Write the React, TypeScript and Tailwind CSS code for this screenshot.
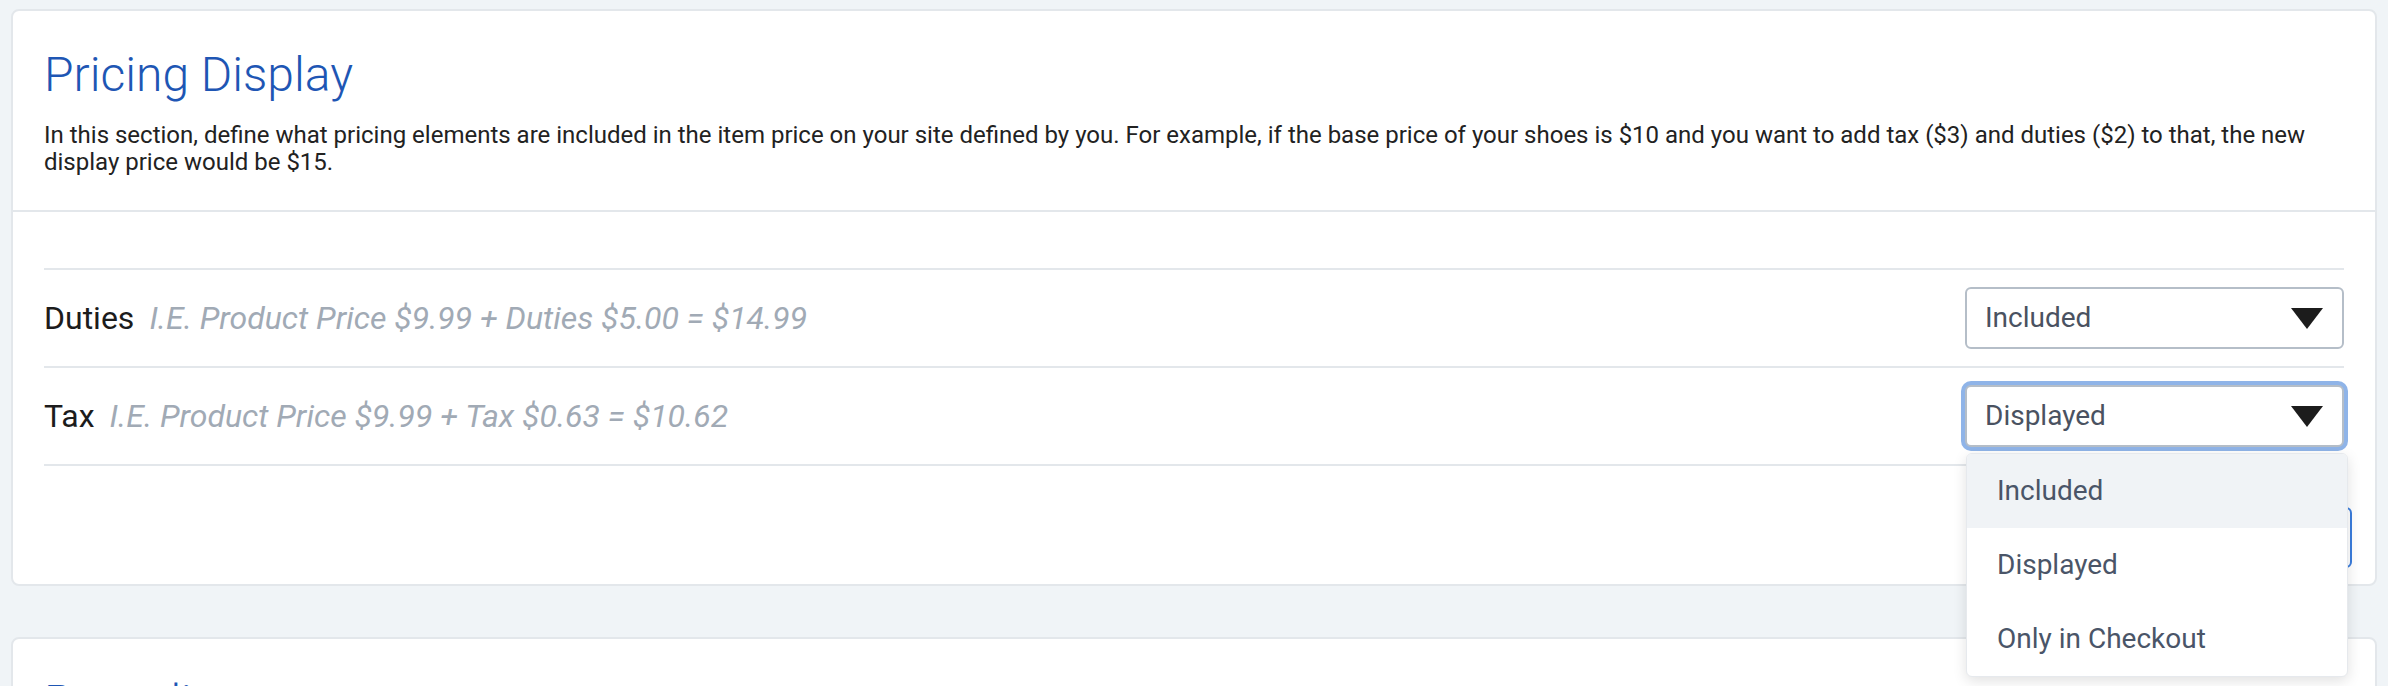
import { ReactNode } from "react";

const OPTIONS = ["Included", "Displayed", "Only in Checkout"];

function Caret() {
  return (
    <svg width="32" height="21" viewBox="0 0 32 21" className="shrink-0">
      <path d="M0 0 H32 L16 21 Z" fill="#1c1c1c" />
    </svg>
  );
}

function SelectBox({ value, open = false }: { value: string; open?: boolean }) {
  return (
    <div className="relative">
      <div
        className={
          open
            ? "flex h-[62px] w-[379px] items-center justify-between rounded-[6px] border-2 border-[#b5bec8] bg-white pl-[18px] pr-[19px] ring-4 ring-[#8fb4e8]"
            : "flex h-[62px] w-[379px] items-center justify-between rounded-[6px] border-2 border-[#b5bec8] bg-white pl-[18px] pr-[19px]"
        }
      >
        <span className="text-[28px] leading-none text-[#4a5261]">{value}</span>
        <Caret />
      </div>

      {open && (
        <ul className="absolute left-[1px] top-[68px] z-10 w-[382px] overflow-hidden rounded-[6px] border border-[#e6e9ed] bg-white shadow-[0_4px_14px_rgba(0,0,0,0.12)]">
          {OPTIONS.map((opt, i) => (
            <li
              key={opt}
              className={
                i === 0
                  ? "flex h-[74px] items-center bg-[#f0f3f6] px-[30px] text-[28px] text-[#4a5568]"
                  : "flex h-[74px] items-center px-[30px] text-[28px] text-[#4a5568]"
              }
            >
              {opt}
            </li>
          ))}
        </ul>
      )}
    </div>
  );
}

function PricingRow({
  label,
  hint,
  children,
}: {
  label: string;
  hint: string;
  children: ReactNode;
}) {
  return (
    <div className="flex items-center justify-between border-b-2 border-[#e3e7eb] py-[17px]">
      <p className="text-[32px] leading-none text-[#1c1c1c]">
        {label}
        <span className="ml-[15px] italic text-[#a1aab5]">{hint}</span>
      </p>
      {children}
    </div>
  );
}

function CardHeader({ title, children }: { title: string; children?: ReactNode }) {
  return (
    <header className="border-b-2 border-[#e3e7eb] px-[31px] pb-[34px] pt-[34px]">
      <h1 className="text-[48px] font-light leading-[59px] text-[#1e56b4]">{title}</h1>
      {children && (
        <p className="mt-[18px] text-[24px] leading-[27px] text-[#222222]">{children}</p>
      )}
    </header>
  );
}

export default function App() {
  return (
    <div className="min-h-screen bg-[#f0f4f7] px-[11px] pt-[9px] font-['Roboto',sans-serif]">
      {/* Pricing display card */}
      <section className="rounded-[8px] border-2 border-[#e3e7eb] bg-white">
        <CardHeader title="Pricing Display">
          In this section, define what pricing elements are included in the item price on your
          site defined by you. For example, if the base price of your shoes is $10 and you want to
          add tax ($3) and duties ($2) to that, the new display price would be $15.
        </CardHeader>

        <div className="px-[31px] pb-[16px] pt-[56px]">
          <div className="border-t-2 border-[#e3e7eb]">
            <PricingRow label="Duties" hint="I.E. Product Price $9.99 + Duties $5.00 = $14.99">
              <SelectBox value="Included" />
            </PricingRow>
            <PricingRow label="Tax" hint="I.E. Product Price $9.99 + Tax $0.63 = $10.62">
              <SelectBox value="Displayed" open />
            </PricingRow>
          </div>

          <div className="mr-[-8px] mt-[41px] flex justify-end">
            <button className="h-[61px] w-[200px] rounded-[6px] border-2 border-[#3b7ddd] text-[26px] text-[#3b7ddd]">
              Save
            </button>
          </div>
        </div>
      </section>

      {/* Next card, cut off by the window */}
      <section className="mt-[51px] rounded-[8px] border-2 border-[#e3e7eb] bg-white">
        <CardHeader title="Rounding" />
        <div className="h-[200px]" />
      </section>
    </div>
  );
}
